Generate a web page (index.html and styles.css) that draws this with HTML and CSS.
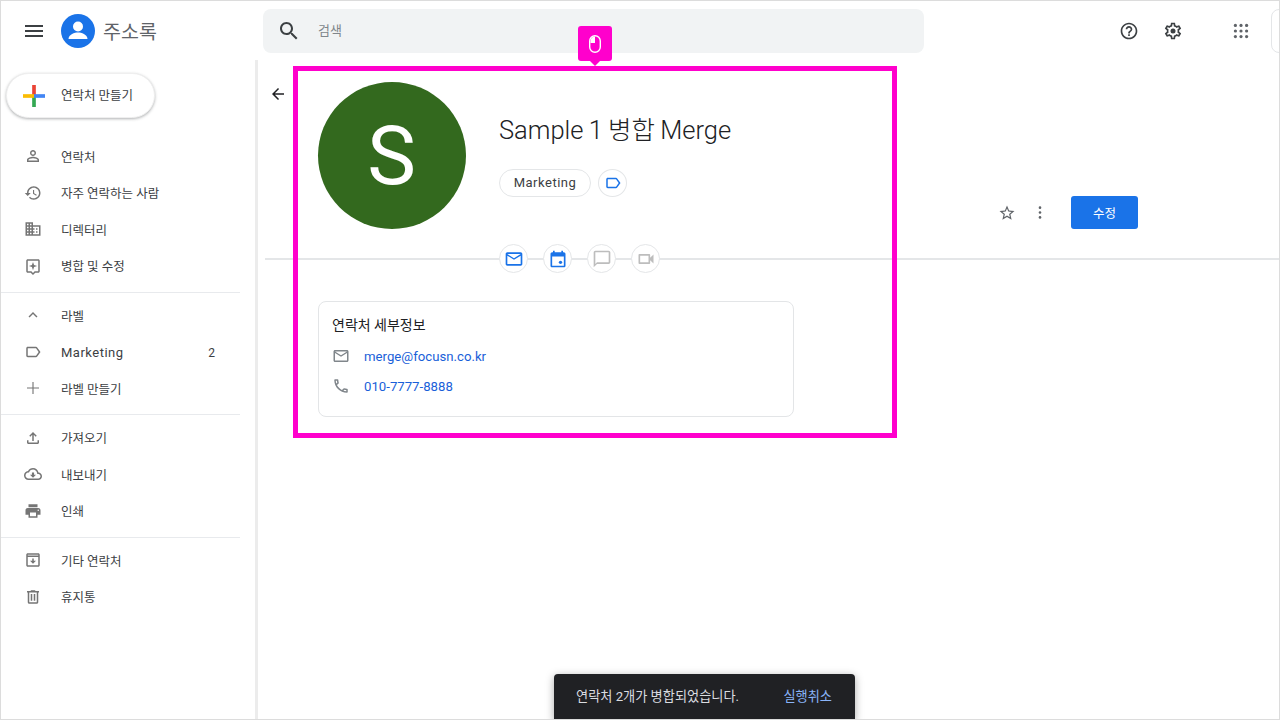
FILE: index.html
```html
<!DOCTYPE html>
<html lang="ko">
<head>
  <meta charset="UTF-8">
  <title>주소록</title>
  <link rel="stylesheet" href="styles.css">
</head>
<body>
  <div class="app">

    <header class="topbar">
      <div class="marca">
        <svg class="ico-menu" viewBox="0 0 24 24"><path d="M3 18h18v-2H3v2zm0-5h18v-2H3v2zm0-7v2h18V6H3z"/></svg>
        <svg class="logo" viewBox="0 0 34 34">
          <circle cx="17" cy="17" r="17" fill="#1a73e8"/>
          <circle cx="17" cy="12.5" r="5" fill="#fff"/>
          <path d="M7.5 25c0-4.6 6.300-6.500 9.500-6.500s9.500 1.900 9.500 6.500z" fill="#fff"/>
        </svg>
        <span class="marca-texto">주소록</span>
      </div>
      <div class="buscador">
        <svg class="ico-buscar" viewBox="0 0 24 24"><path d="M15.500 14h-.79l-.28-.27C15.410 12.590 16 11.110 16 9.500 16 5.910 13.090 3 9.500 3S3 5.910 3 9.500 5.910 16 9.500 16c1.610 0 3.090-.59 4.230-1.570l.27.28v.79l5 4.990L20.490 19l-4.990-5zm-6 0C7.010 14 5 11.990 5 9.500S7.010 5 9.500 5 14 7.010 14 9.500 11.990 14 9.500 14z"/></svg>
        <span class="buscador-texto">검색</span>
      </div>
      <svg class="ico-top ayuda" viewBox="0 0 24 24"><path d="M11 18h2v-2h-2v2zm1-16C6.480 2 2 6.480 2 12s4.480 10 10 10 10-4.480 10-10S17.520 2 12 2zm0 18c-4.410 0-8-3.590-8-8s3.590-8 8-8 8 3.590 8 8-3.590 8-8 8zm0-14c-2.210 0-4 1.790-4 4h2c0-1.100.9-2 2-2s2 .9 2 2c0 2-3 1.750-3 5h2c0-2.250 3-2.500 3-5 0-2.210-1.790-4-4-4z"/></svg>
      <svg class="ico-top ajustes" viewBox="0 0 24 24"><path d="M19.430 12.980c.04-.32.07-.64.07-.98 0-.34-.03-.66-.07-.98l2.110-1.650c.19-.15.24-.42.12-.64l-2-3.460c-.09-.16-.26-.25-.44-.25-.06 0-.12.01-.17.03l-2.490 1c-.52-.4-1.080-.73-1.690-.98l-.38-2.650C14.460 2.180 14.250 2 14 2h-4c-.25 0-.46.18-.49.42l-.38 2.650c-.61.25-1.170.59-1.690.98l-2.490-1c-.06-.02-.12-.03-.18-.03-.17 0-.34.09-.43.25l-2 3.460c-.13.22-.07.49.12.64l2.110 1.650c-.04.32-.07.65-.07.98 0 .33.03.66.07.98l-2.110 1.650c-.19.15-.24.42-.12.64l2 3.460c.09.16.26.25.44.25.06 0 .12-.01.17-.03l2.490-1c.52.4 1.080.73 1.690.98l.38 2.650c.03.24.24.42.49.42h4c.25 0 .46-.18.49-.42l.38-2.650c.61-.25 1.170-.59 1.690-.98l2.490 1c.06.02.12.03.18.03.17 0 .34-.09.43-.25l2-3.460c.12-.22.07-.49-.12-.64l-2.110-1.650zm-1.980-1.710c.04.31.05.52.05.73 0 .21-.02.43-.05.73l-.14 1.130.89.7 1.080.84-.7 1.210-1.270-.51-1.040-.42-.9.68c-.43.32-.84.56-1.250.73l-1.060.43-.16 1.130-.2 1.350h-1.400l-.19-1.350-.16-1.130-1.060-.43c-.43-.18-.83-.41-1.230-.71l-.91-.7-1.060.43-1.270.51-.7-1.210 1.080-.84.89-.7-.14-1.130c-.03-.31-.05-.54-.05-.74s.02-.43.05-.73l.14-1.130-.89-.7-1.080-.84.7-1.210 1.270.51 1.040.42.9-.68c.43-.32.84-.56 1.250-.73l1.060-.43.16-1.130.2-1.350h1.390l.19 1.350.16 1.130 1.060.43c.43.18.83.41 1.230.71l.91.7 1.060-.43 1.270-.51.7 1.210-1.070.85-.89.7.14 1.130z"/><circle cx="12" cy="12" r="3"/></svg>
      <svg class="ico-top apps" viewBox="0 0 20 20">
        <circle cx="3" cy="3" r="2"/><circle cx="10" cy="3" r="2"/><circle cx="17" cy="3" r="2"/>
        <circle cx="3" cy="10" r="2"/><circle cx="10" cy="10" r="2"/><circle cx="17" cy="10" r="2"/>
        <circle cx="3" cy="17" r="2"/><circle cx="10" cy="17" r="2"/><circle cx="17" cy="17" r="2"/>
      </svg>
      <div class="cuenta"></div>
    </header>

    <div class="cuerpo">
      <aside class="lateral">
        <button class="crear">
          <svg class="ico-mas" viewBox="0 0 24 24">
            <rect x="10" y="0" width="4" height="12" fill="#ea4335"/>
            <rect x="10" y="12" width="4" height="12" fill="#34a853"/>
            <rect x="0" y="10" width="12" height="4" fill="#fbbc04"/>
            <rect x="12" y="10" width="12" height="4" fill="#4285f4"/>
          </svg>
          <span class="crear-texto">연락처 만들기</span>
        </button>

        <nav class="grupo primero">
          <a class="item"><svg viewBox="0 0 24 24"><path d="M12 5.900a2.100 2.100 0 110 4.200 2.100 2.100 0 010-4.200m0 9c2.970 0 6.100 1.460 6.100 2.100v1.100H5.900V17c0-.64 3.130-2.100 6.100-2.100M12 4C9.790 4 8 5.790 8 8s1.790 4 4 4 4-1.790 4-4-1.790-4-4-4zm0 9c-2.670 0-8 1.340-8 4v3h16v-3c0-2.660-5.330-4-8-4z"/></svg>연락처</a>
          <a class="item"><svg viewBox="0 0 24 24"><path d="M13 3c-4.970 0-9 4.030-9 9H1l3.890 3.890.07.14L9 12H6c0-3.870 3.130-7 7-7s7 3.130 7 7-3.130 7-7 7c-1.930 0-3.680-.79-4.940-2.060l-1.420 1.420C8.270 19.990 10.510 21 13 21c4.970 0 9-4.030 9-9s-4.030-9-9-9zm-1 5v5l4.280 2.540.72-1.210-3.500-2.080V8H12z"/></svg>자주 연락하는 사람</a>
          <a class="item"><svg viewBox="0 0 24 24"><path d="M12 7V3H2v18h20V7H12zM6 19H4v-2h2v2zm0-4H4v-2h2v2zm0-4H4V9h2v2zm0-4H4V5h2v2zm4 12H8v-2h2v2zm0-4H8v-2h2v2zm0-4H8V9h2v2zm0-4H8V5h2v2zm10 12h-8v-2h2v-2h-2v-2h2v-2h-2V9h8v10zm-2-8h-2v2h2v-2zm0 4h-2v2h2v-2z"/></svg>디렉터리</a>
          <a class="item"><svg viewBox="0 0 24 24"><path d="M19 3H5c-1.100 0-2 .9-2 2v14c0 1.100.9 2 2 2h4l3 3 3-3h4c1.100 0 2-.9 2-2V5c0-1.100-.9-2-2-2zm0 16h-4.830L12 21.170 9.830 19H5V5h14v14z"/><path d="M12 6.500l1.400 4.100 4.100 1.400-4.100 1.400L12 17.500l-1.400-4.100L6.500 12l4.100-1.400z"/></svg>병합 및 수정</a>
        </nav>

        <nav class="grupo etiquetas">
          <a class="item"><svg viewBox="0 0 24 24"><path d="M12 8l-6 6 1.410 1.410L12 10.830l4.590 4.580L18 14z"/></svg>라벨</a>
          <a class="item latin"><svg viewBox="0 0 24 24"><path d="M17.630 5.840C17.270 5.330 16.670 5 16 5L5 5.010C3.900 5.010 3 5.900 3 7v10c0 1.100.9 1.990 2 1.990L16 19c.67 0 1.270-.33 1.630-.84L22 12l-4.370-6.160zM16 17H5V7h11l3.550 5L16 17z"/></svg><span>Marketing</span><span class="cuenta-num">2</span></a>
          <a class="item"><svg viewBox="0 0 24 24"><path d="M20 12.750h-7.250V20h-1.500v-7.250H4v-1.500h7.250V4h1.500v7.250H20z"/></svg>라벨 만들기</a>
        </nav>

        <nav class="grupo herramientas">
          <a class="item"><svg viewBox="0 0 24 24"><path d="M18 15v3H6v-3H4v3c0 1.100.9 2 2 2h12c1.100 0 2-.9 2-2v-3h-2zM7 9l1.410 1.410L11 7.830V16h2V7.830l2.590 2.580L17 9l-5-5-5 5z"/></svg>가져오기</a>
          <a class="item"><svg viewBox="0 0 24 24"><path d="M19.350 10.040C18.670 6.590 15.640 4 12 4 9.110 4 6.600 5.640 5.350 8.040 2.340 8.360 0 10.910 0 14c0 3.310 2.690 6 6 6h13c2.760 0 5-2.240 5-5 0-2.640-2.050-4.780-4.650-4.960zM19 18H6c-2.210 0-4-1.790-4-4 0-2.050 1.530-3.760 3.560-3.970l1.070-.11.5-.95C8.080 7.140 9.940 6 12 6c2.620 0 4.880 1.860 5.390 4.430l.3 1.500 1.530.11c1.560.1 2.780 1.410 2.780 2.960 0 1.650-1.350 3-3 3zm-5.550-8h-2.900v3H8l4 4 4-4h-2.550z"/></svg>내보내기</a>
          <a class="item"><svg viewBox="0 0 24 24"><path d="M19 8H5c-1.660 0-3 1.340-3 3v6h4v4h12v-4h4v-6c0-1.660-1.340-3-3-3zm-3 11H8v-5h8v5zm3-7c-.55 0-1-.45-1-1s.45-1 1-1 1 .45 1 1-.45 1-1 1zm-1-9H6v4h12V3z"/></svg>인쇄</a>
        </nav>

        <nav class="grupo">
          <a class="item"><svg viewBox="0 0 24 24"><path d="M19 3H5c-1.100 0-2 .9-2 2v14c0 1.100.9 2 2 2h14c1.100 0 2-.9 2-2V5c0-1.100-.9-2-2-2zm0 16H5V8h14v11zm0-13H5V5h14v1zM12 17l4-4h-3v-3h-2v3H8z"/></svg>기타 연락처</a>
          <a class="item"><svg viewBox="0 0 24 24"><path d="M15 4V3H9v1H4v2h1v13c0 1.100.9 2 2 2h10c1.100 0 2-.9 2-2V6h1V4h-5zm2 15H7V6h10v13zM9 8h2v9H9zm4 0h2v9h-2z"/></svg>휴지통</a>
        </nav>
      </aside>

      <main class="principal">
        <section class="cabecera">
          <svg class="ico-volver" viewBox="0 0 24 24"><path d="M20 11H7.830l5.590-5.590L12 4l-8 8 8 8 1.410-1.410L7.830 13H20v-2z"/></svg>
          <div class="avatar">S</div>
          <div class="datos">
            <h1 class="nombre">Sample 1 병합 Merge</h1>
            <div class="chips">
              <span class="chip">Marketing</span>
              <span class="chip-redondo"><svg viewBox="0 0 24 24"><path d="M17.630 5.840C17.270 5.330 16.670 5 16 5L5 5.010C3.900 5.010 3 5.900 3 7v10c0 1.100.9 1.990 2 1.990L16 19c.67 0 1.270-.33 1.630-.84L22 12l-4.370-6.160zM16 17H5V7h11l3.550 5L16 17z"/></svg></span>
            </div>
          </div>
          <div class="acciones">
            <svg class="ico-estrella" viewBox="0 0 24 24"><path d="M22 9.240l-7.190-.62L12 2 9.190 8.630 2 9.240l5.460 4.730L5.820 21 12 17.270 18.180 21l-1.630-7.030L22 9.240zM12 15.400l-3.760 2.270 1-4.280-3.320-2.880 4.380-.38L12 6.100l1.710 4.040 4.380.38-3.320 2.880 1 4.280L12 15.400z"/></svg>
            <svg class="ico-puntos" viewBox="0 0 4 16"><circle cx="2" cy="2" r="1.600"/><circle cx="2" cy="8" r="1.600"/><circle cx="2" cy="14" r="1.600"/></svg>
            <button class="editar">수정</button>
          </div>
        </section>

        <div class="contacto-botones">
          <span class="redondo activo"><svg viewBox="0 0 24 24"><path d="M20 4H4c-1.100 0-1.990.9-1.990 2L2 18c0 1.100.9 2 2 2h16c1.100 0 2-.9 2-2V6c0-1.100-.9-2-2-2zm0 14H4V8l8 5 8-5v10zm-8-7L4 6h16l-8 5z"/></svg></span>
          <span class="redondo activo"><svg viewBox="0 0 24 24"><path d="M19 4h-1V2h-2v2H8V2H6v2H5c-1.100 0-2 .9-2 2v14c0 1.100.9 2 2 2h14c1.100 0 2-.9 2-2V6c0-1.100-.9-2-2-2zm0 16H5V9h14v11z"/><rect x="13" y="14" width="4" height="4" rx="2"/></svg></span>
          <span class="redondo"><svg viewBox="0 0 24 24"><path d="M20 2H4c-1.100 0-2 .9-2 2v18l4-4h14c1.100 0 2-.9 2-2V4c0-1.100-.9-2-2-2zm0 14H6l-2 2V4h16v12z"/></svg></span>
          <span class="redondo"><svg viewBox="0 0 24 24"><path d="M15 8v8H5V8h10m1-2H4c-.55 0-1 .45-1 1v10c0 .55.45 1 1 1h12c.55 0 1-.45 1-1v-3.500l4 4v-11l-4 4V7c0-.55-.45-1-1-1z"/></svg></span>
        </div>

        <section class="tarjeta">
          <h2>연락처 세부정보</h2>
          <div class="fila">
            <svg viewBox="0 0 24 24"><path d="M20 4H4c-1.100 0-1.990.9-1.990 2L2 18c0 1.100.9 2 2 2h16c1.100 0 2-.9 2-2V6c0-1.100-.9-2-2-2zm0 14H4V8l8 5 8-5v10zm-8-7L4 6h16l-8 5z"/></svg>
            <a>merge@focusn.co.kr</a>
          </div>
          <div class="fila">
            <svg viewBox="0 0 24 24"><path d="M6.540 5c.06.89.21 1.760.45 2.590l-1.200 1.200c-.41-1.200-.67-2.470-.76-3.790h1.510m9.860 12.020c.85.24 1.720.39 2.600.45v1.490c-1.320-.09-2.590-.35-3.800-.75l1.200-1.190M7.500 3H4c-.55 0-1 .45-1 1 0 9.390 7.610 17 17 17 .55 0 1-.45 1-1v-3.490c0-.55-.45-1-1-1-1.240 0-2.450-.2-3.570-.57-.1-.04-.21-.05-.31-.05-.26 0-.51.1-.71.29l-2.200 2.200c-2.830-1.450-5.150-3.760-6.590-6.590l2.200-2.200c.28-.28.36-.67.25-1.020C8.700 6.450 8.500 5.250 8.500 4c0-.55-.45-1-1-1z"/></svg>
            <a>010-7777-8888</a>
          </div>
        </section>
      </main>
    </div>

    <!-- resaltado sobre la captura -->
    <div class="resaltado"></div>
    <div class="globo">
      <svg viewBox="0 0 12 18">
        <rect x="0.7" y="0.7" width="10.6" height="16.6" rx="5.300" fill="none" stroke="#fff" stroke-width="1.400"/>
        <path d="M6 1.500C3.500 1.500 1.500 3.500 1.500 6v2H6z" fill="#fff"/>
      </svg>
    </div>

    <div class="aviso">
      <span>연락처 2개가 병합되었습니다.</span>
      <a>실행취소</a>
    </div>
  </div>
</body>
</html>
```

FILE: styles.css
```css
* {
  margin: 0;
  padding: 0;
  box-sizing: border-box;
}

body {
  font-family: Roboto, "Noto Sans CJK KR", sans-serif;
  color: #3c4043;
  background: #fff;
}

svg {
  display: block;
  flex: none;
  fill: currentColor;
}

.app {
  position: relative;
  width: 1280px;
  height: 720px;
  overflow: hidden;
  border: 1px solid #dcdcdc;
  display: flex;
  flex-direction: column;
}

/* barra superior */
.topbar {
  height: 59px;
  flex: none;
  display: flex;
  align-items: center;
}

.marca {
  width: 262px;
  flex: none;
  display: flex;
  align-items: center;
  padding-left: 21px;
}

.ico-menu {
  width: 24px;
  height: 24px;
  color: #3c4043;
}

.logo {
  width: 34px;
  height: 34px;
  margin-left: 15px;
}

.marca-texto {
  margin-left: 8px;
  font-size: 19.5px;
  color: #5f6368;
}

.buscador {
  width: 661px;
  height: 44px;
  flex: none;
  background: #f1f3f4;
  border-radius: 8px;
  display: flex;
  align-items: center;
  padding-left: 14px;
  font-size: 13px;
  color: #80868b;
}

.buscador-texto {
  padding-bottom: 2px;
}

.ico-buscar {
  width: 24px;
  height: 24px;
  color: #3c4043;
  margin-right: 17px;
}

.ico-top {
  width: 20px;
  height: 20px;
  color: #3c4043;
}

.ayuda { margin-left: 195px; }
.ajustes { margin-left: 24px; }
.apps { margin-left: 50px; width: 16px; height: 16px; color: #5f6368; }

.cuenta {
  width: 30px;
  height: 44px;
  margin-left: 22px;
  border: 1px solid #e4e6e8;
  border-radius: 8px;
  flex: none;
}

.cuerpo {
  flex: 1;
  display: flex;
  min-height: 0;
}

/* lateral */
.lateral {
  width: 257px;
  flex: none;
  border-right: 3px solid #ececec;
  padding-top: 13px;
}

.crear {
  width: 149px;
  height: 45px;
  margin-left: 5px;
  display: flex;
  align-items: center;
  padding-left: 16px;
  gap: 16px;
  background: #fff;
  border: 1px solid #efefef;
  border-radius: 23px;
  box-shadow: 0 1px 3px rgba(60, 64, 67, 0.4);
  font-family: inherit;
  font-size: 12.5px;
  color: #3c4043;
}

.crear-texto {
  padding-bottom: 2px;
}

.ico-mas {
  width: 22px;
  height: 22px;
}

.grupo {
  width: 239px;
  padding: 4px 0 8px;
  border-top: 1px solid #e8eaed;
}

.grupo.primero {
  border-top: none;
  padding-top: 20px;
}

.grupo.etiquetas {
  padding-bottom: 7px;
}

.grupo.herramientas {
  padding-top: 5px;
}

.item {
  height: 36.5px;
  display: flex;
  align-items: center;
  font-size: 12.5px;
  color: #3c4043;
}

.item svg {
  width: 18px;
  height: 18px;
  margin: 0 19px 0 23px;
  color: #757575;
}

.item.latin span {
  padding-top: 2px;
  font-size: 13px;
  letter-spacing: 0.5px;
}

.item.latin .cuenta-num {
  margin-left: auto;
  margin-right: 25px;
  font-size: 12px;
  letter-spacing: 0;
}

/* contenido */
.principal {
  flex: 1;
  min-width: 0;
  padding-top: 22px;
}

.cabecera {
  display: flex;
  padding-left: 11px;
}

.ico-volver {
  width: 18px;
  height: 18px;
  margin-top: 3px;
  margin-right: 31px;
  color: #202124;
}

.avatar {
  width: 148px;
  height: 147px;
  padding-right: 1px;
  border-radius: 50%;
  background: #33691e;
  color: #fff;
  font-size: 82px;
  display: flex;
  align-items: center;
  justify-content: center;
  flex: none;
}

.datos {
  margin-left: 33px;
  padding-top: 32px;
}

.nombre {
  font-size: 25.5px;
  line-height: 32px;
  font-weight: 300;
  word-spacing: -1px;
  color: #202124;
}

.chips {
  display: flex;
  gap: 7px;
  margin-top: 23px;
}

.chip {
  height: 28px;
  width: 92px;
  padding-bottom: 1px;
  border: 1px solid #e4e6e8;
  border-radius: 14px;
  display: flex;
  align-items: center;
  justify-content: center;
  font-size: 13px;
  letter-spacing: 0.5px;
}

.chip-redondo {
  width: 29px;
  height: 28px;
  border: 1px solid #e4e6e8;
  border-radius: 50%;
  display: flex;
  align-items: center;
  justify-content: center;
  color: #1a73e8;
}

.chip-redondo svg {
  width: 18px;
  height: 18px;
}

.acciones {
  margin-left: auto;
  margin-right: 141px;
  align-self: flex-end;
  display: flex;
  align-items: center;
}

.ico-estrella {
  width: 18px;
  height: 18px;
  color: #5f6368;
}

.ico-puntos {
  width: 4px;
  height: 13px;
  margin-left: 22px;
  color: #5f6368;
}

.editar {
  width: 67px;
  height: 33px;
  margin-left: 29px;
  background: #1a73e8;
  border: none;
  border-radius: 3px;
  color: #fff;
  font-family: inherit;
  font-size: 12.5px;
}

.contacto-botones {
  height: 29px;
  margin: 15px 0 0 7px;
  padding-left: 234px;
  display: flex;
  gap: 15px;
  background: linear-gradient(#e4e6e8, #e4e6e8) 0 14px / 100% 2px no-repeat;
}

.redondo {
  width: 29px;
  height: 29px;
  background: #fff;
  border: 1px solid #e4e6e8;
  border-radius: 50%;
  display: flex;
  align-items: center;
  justify-content: center;
  color: #bdbdbd;
}

.redondo.activo {
  color: #1a73e8;
}

.redondo svg {
  width: 20px;
  height: 20px;
}

.tarjeta {
  width: 476px;
  height: 116px;
  margin: 28px 0 0 60px;
  padding: 13px 13px 0;
  border: 1px solid #e3e5e7;
  border-radius: 8px;
}

.tarjeta h2 {
  font-size: 14px;
  line-height: 20px;
  font-weight: 400;
  color: #202124;
}

.fila {
  height: 30px;
  display: flex;
  align-items: center;
  font-size: 13.2px;
  color: #1a5fd9;
}

.tarjeta h2 + .fila {
  margin-top: 6px;
}

.fila svg {
  width: 18px;
  height: 18px;
  margin-right: 14px;
  color: #80868b;
}

/* lo que va encima */
.resaltado {
  position: absolute;
  left: 292px;
  top: 65px;
  width: 604px;
  height: 372px;
  border: 5px solid #ff00cc;
}

.globo {
  position: absolute;
  left: 577px;
  top: 25px;
  width: 34px;
  height: 35px;
  background: #ff00cc;
  border-radius: 3px;
  display: flex;
  align-items: center;
  justify-content: center;
}

.globo::after {
  content: "";
  position: absolute;
  left: 12px;
  bottom: -5px;
  border-left: 5px solid transparent;
  border-right: 5px solid transparent;
  border-top: 5px solid #ff00cc;
}

.globo svg {
  width: 12px;
  height: 18px;
}

.aviso {
  position: absolute;
  left: 553px;
  bottom: -1px;
  width: 301px;
  height: 46px;
  background: #202124;
  border-radius: 4px 4px 0 0;
  box-shadow: 0 2px 8px rgba(0, 0, 0, 0.35);
  display: flex;
  align-items: center;
  justify-content: space-between;
  padding: 0 23px 3px 22px;
  font-size: 13.2px;
  color: #dadce0;
}

.aviso a {
  color: #8ab4f8;
}
```
